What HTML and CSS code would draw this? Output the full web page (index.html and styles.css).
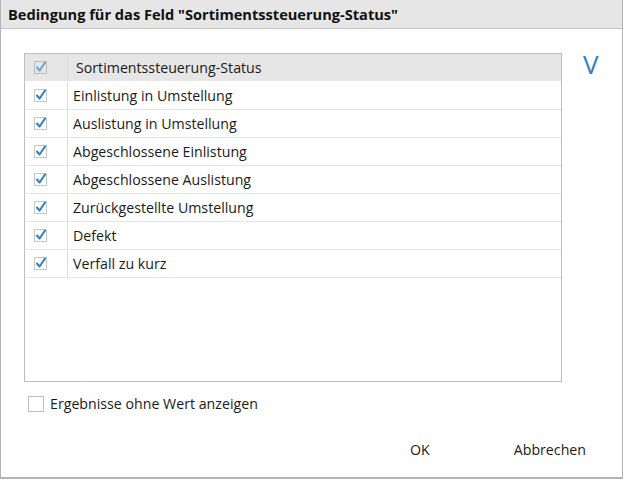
FILE: index.html
```html
<!DOCTYPE html>
<html lang="de">
<head>
<meta charset="utf-8">
<link rel="stylesheet" href="styles.css">
</head>
<body>
<div class="dialog">
  <div class="titlebar">Bedingung für das Feld "Sortimentssteuerung-Status"</div>
  <div class="content">
    <div class="top">
      <div class="list">
        <div class="row header">
          <div class="cbcell"><span class="cb checked header-cb"><svg viewBox="0 0 14 14"><path d="M3 7.5 L5.6 10.5 L11 2.5" /></svg></span></div>
          <div class="label">Sortimentssteuerung-Status</div>
        </div>
        <div class="row"><div class="cbcell"><span class="cb checked"><svg viewBox="0 0 14 14"><path d="M3 7.5 L5.6 10.5 L11 2.5" /></svg></span></div><div class="label">Einlistung in Umstellung</div></div>
        <div class="row"><div class="cbcell"><span class="cb checked"><svg viewBox="0 0 14 14"><path d="M3 7.5 L5.6 10.5 L11 2.5" /></svg></span></div><div class="label">Auslistung in Umstellung</div></div>
        <div class="row"><div class="cbcell"><span class="cb checked"><svg viewBox="0 0 14 14"><path d="M3 7.5 L5.6 10.5 L11 2.5" /></svg></span></div><div class="label">Abgeschlossene Einlistung</div></div>
        <div class="row"><div class="cbcell"><span class="cb checked"><svg viewBox="0 0 14 14"><path d="M3 7.5 L5.6 10.5 L11 2.5" /></svg></span></div><div class="label">Abgeschlossene Auslistung</div></div>
        <div class="row"><div class="cbcell"><span class="cb checked"><svg viewBox="0 0 14 14"><path d="M3 7.5 L5.6 10.5 L11 2.5" /></svg></span></div><div class="label">Zurückgestellte Umstellung</div></div>
        <div class="row"><div class="cbcell"><span class="cb checked"><svg viewBox="0 0 14 14"><path d="M3 7.5 L5.6 10.5 L11 2.5" /></svg></span></div><div class="label">Defekt</div></div>
        <div class="row"><div class="cbcell"><span class="cb checked"><svg viewBox="0 0 14 14"><path d="M3 7.5 L5.6 10.5 L11 2.5" /></svg></span></div><div class="label">Verfall zu kurz</div></div>
      </div>
      <div class="vmark">V</div>
    </div>
    <div class="option"><span class="cb big"></span><span>Ergebnisse ohne Wert anzeigen</span></div>
    <div class="buttons">
      <span class="btn ok">OK</span>
      <span class="btn cancel">Abbrechen</span>
    </div>
  </div>
</div>
</body>
</html>
```
FILE: styles.css
```css
html, body {
  margin: 0;
  padding: 0;
  background: #ffffff;
}
body {
  font-family: "Open Sans", "Noto Sans", "Liberation Sans", sans-serif;
  font-size: 14.2px;
  color: #1a1a1a;
}
.dialog {
  width: 623px;
  height: 479px;
  box-sizing: border-box;
  border-left: 1px solid #b4b4b4;
  border-right: 1px solid #b4b4b4;
  border-bottom: 2px solid #b4b4b4;
  display: flex;
  flex-direction: column;
}
.titlebar {
  height: 29px;
  box-sizing: border-box;
  background: #e6e6e6;
  border-bottom: 1px solid #c4c4c4;
  font-weight: bold;
  font-size: 14.6px;
  line-height: 28px;
  padding-left: 7px;
  color: #111;
  white-space: nowrap;
}
.content {
  flex: 1;
  display: flex;
  flex-direction: column;
  padding: 24px 0 0 23px;
}
.top {
  display: flex;
  align-items: flex-start;
}
.list {
  width: 538px;
  height: 329px;
  box-sizing: border-box;
  border: 1px solid #bdbdbd;
  position: relative;
}
.row {
  display: flex;
  height: 28px;
  box-sizing: border-box;
  border-bottom: 1px solid #e6e6e6;
}
.row.header {
  background: #e6e6e6;
  border-bottom: 1px solid #ffffff;
}
.cbcell {
  width: 43px;
  box-sizing: border-box;
  border-right: 1px solid #dcdcdc;
  display: flex;
  align-items: center;
  padding-left: 9px;
}
.label {
  padding-left: 5px;
  line-height: 27px;
  white-space: nowrap;
}
.header .label {
  padding-left: 8px;
}
.cb {
  width: 13px;
  height: 13px;
  box-sizing: border-box;
  border: 1px solid #c8c8c8;
  background: #fff;
  display: inline-block;
  position: relative;
}
.cb svg {
  position: absolute;
  left: -1px;
  top: -2px;
  width: 14px;
  height: 14px;
}
.cb svg path {
  fill: none;
  stroke: #2f7fc4;
  stroke-width: 2;
  stroke-linecap: round;
  stroke-linejoin: round;
}
.header-cb {
  background: #e6e6e6;
  border-color: #bcbcbc;
}
.header-cb svg path {
  stroke: #6aa2d4;
}
.vmark {
  margin-left: 21px;
  margin-top: -6px;
  font-size: 26px;
  color: #3181c6;
  line-height: 34px;
  font-family: "Open Sans", "Noto Sans", sans-serif;
}
.option {
  display: flex;
  align-items: center;
  margin-top: 12px;
  margin-left: 4px;
  gap: 6px;
}
.cb.big {
  width: 16px;
  height: 16px;
  border-color: #bfbfbf;
}
.buttons {
  display: flex;
  margin-top: 27px;
  padding-left: 386px;
}
.btn {
  display: inline-block;
  line-height: 20px;
}
.cancel {
  margin-left: 84px;
}
```
